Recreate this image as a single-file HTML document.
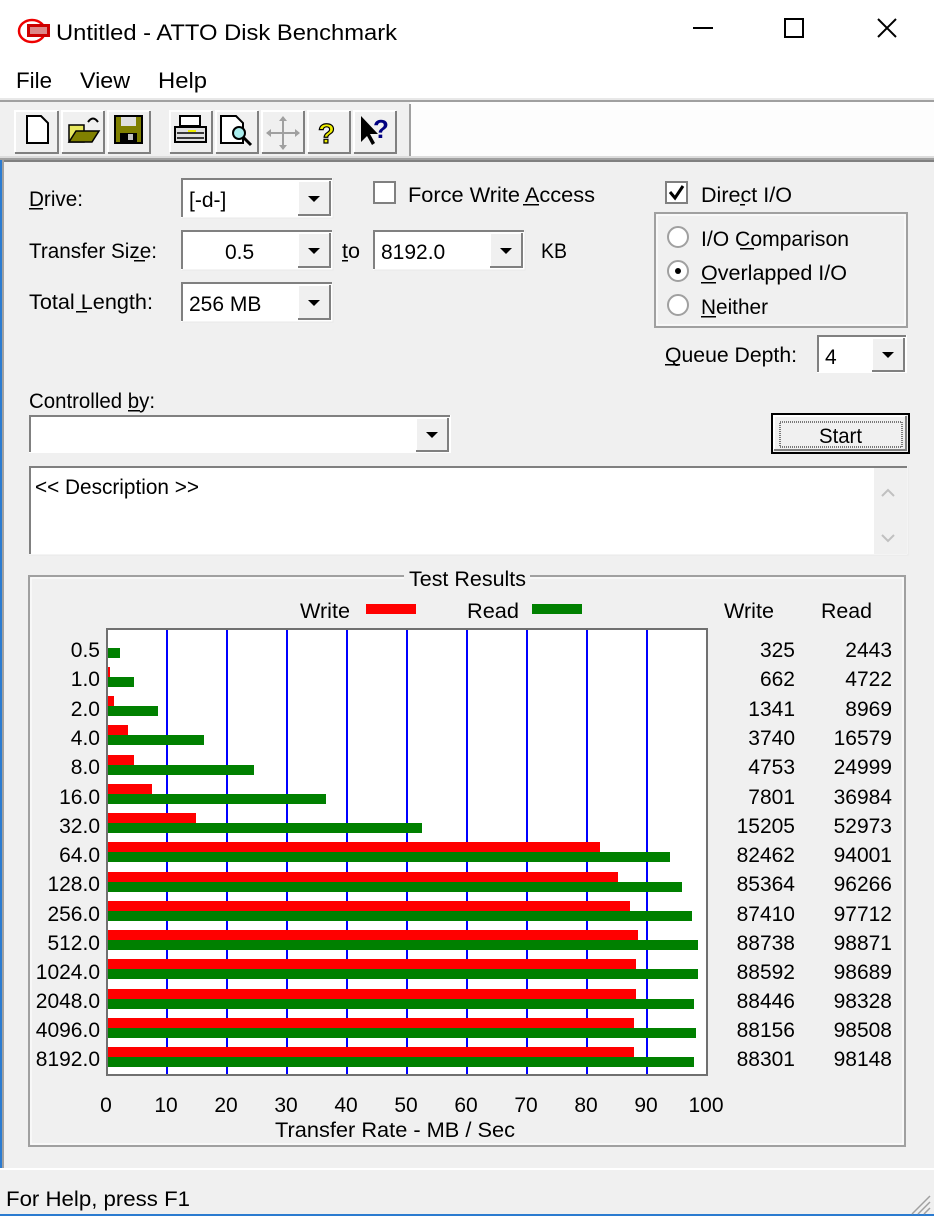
<!DOCTYPE html>
<html><head><meta charset="utf-8"><style>
html,body{margin:0;padding:0;width:934px;height:1216px;overflow:hidden;background:#f0f0f0}
svg{display:block}
text{font-family:"Liberation Sans",sans-serif;fill:#000}
</style></head><body>
<svg width="934" height="1216" viewBox="0 0 934 1216" xmlns="http://www.w3.org/2000/svg">
<defs>
<g id="arrow"><path d="M-6,-3 L6,-3 L0,3 Z" fill="#000"/></g>
</defs>
<!-- title & menu -->
<rect x="0" y="0" width="934" height="100" fill="#fff"/>
<ellipse cx="32" cy="31" rx="13" ry="11" fill="none" stroke="#e00" stroke-width="2.5"/>
<rect x="27" y="24" width="23" height="13" fill="#c00"/>
<rect x="30" y="27" width="17" height="7" fill="#d88"/>
<text x="56" y="40" font-size="22" textLength="341" lengthAdjust="spacingAndGlyphs">Untitled - ATTO Disk Benchmark</text>
<rect x="693" y="27" width="20" height="2" fill="#000"/>
<rect x="785" y="19" width="18" height="18" fill="none" stroke="#000" stroke-width="2"/>
<path d="M878,19 L896,37 M896,19 L878,37" stroke="#000" stroke-width="2"/>
<text x="16" y="88" font-size="22" textLength="36" lengthAdjust="spacingAndGlyphs">File</text>
<text x="80" y="88" font-size="22" textLength="50" lengthAdjust="spacingAndGlyphs">View</text>
<text x="158" y="88" font-size="22" textLength="49" lengthAdjust="spacingAndGlyphs">Help</text>
<rect x="0" y="98" width="934" height="2" fill="#e8e8e8"/>
<rect x="0" y="100" width="934" height="2" fill="#a0a0a0"/>
<!-- toolbar -->
<rect x="0" y="102" width="410" height="56" fill="#f0f0f0"/>
<rect x="410" y="102" width="524" height="56" fill="#fdfdfd"/>
<rect x="409" y="104" width="2" height="54" fill="#a0a0a0"/>
<rect x="0" y="156" width="934" height="2" fill="#dcdcdc"/>
<g fill="#f0f0f0" stroke-width="2">
<g id="tb">
</g>
</g>
<g>
<!-- buttons -->
<g stroke="#fff" stroke-width="2" fill="none">
<path d="M15,152 V111 H58"/><path d="M62,152 V111 H104"/><path d="M108,152 V111 H150"/>
<path d="M170,152 V111 H212"/><path d="M216,152 V111 H258"/><path d="M262,152 V111 H304"/><path d="M308,152 V111 H350"/><path d="M354,152 V111 H396"/>
</g>
<g stroke="#808080" stroke-width="2" fill="none">
<path d="M15,153 H58 V111"/><path d="M62,153 H104 V111"/><path d="M108,153 H150 V111"/>
<path d="M170,153 H212 V111"/><path d="M216,153 H258 V111"/><path d="M262,153 H304 V111"/><path d="M308,153 H350 V111"/><path d="M354,153 H396 V111"/>
</g>
<!-- new -->
<path d="M27,116 H41 L48,123 V143 H27 Z" fill="#fff" stroke="#000" stroke-width="2"/>
<!-- open -->
<path d="M69,125 H84 V142 H69 Z" fill="#e8e860" stroke="#000" stroke-width="1.5"/>
<path d="M69,142 L76,131 H99 L92,142 Z" fill="#808000" stroke="#000" stroke-width="1.5"/>
<path d="M88,122 Q93,115 98,122" fill="none" stroke="#000" stroke-width="2"/>
<!-- save -->
<rect x="115" y="116" width="27" height="27" fill="#808000" stroke="#000" stroke-width="2"/>
<rect x="121" y="117" width="15" height="9" fill="#e0e0e0"/>
<rect x="120" y="133" width="17" height="9" fill="#000"/>
<rect x="128" y="134" width="5" height="6" fill="#c0c0c0"/>
<!-- print -->
<rect x="180" y="116" width="20" height="10" fill="#fff" stroke="#000" stroke-width="2"/>
<path d="M175,127 H206 V142 H175 Z" fill="#e0e0e0" stroke="#000" stroke-width="2"/>
<path d="M177,133 H204 M177,138 H204" stroke="#000" stroke-width="1.5"/>
<rect x="188" y="130" width="8" height="2" fill="#ee0"/>
<!-- preview -->
<path d="M221,116 H236 L243,123 V143 H221 Z" fill="#fff" stroke="#000" stroke-width="2"/>
<circle cx="239" cy="133" r="6" fill="#aee" stroke="#000" stroke-width="2"/>
<path d="M243,137 L251,145" stroke="#000" stroke-width="3"/>
<!-- move -->
<path d="M283,117 V149 M267,133 H299" stroke="#a0a0a0" stroke-width="2"/>
<path d="M283,116 l-4,5 h8z M283,150 l-4,-5 h8z M266,133 l5,-4 v8z M300,133 l-5,-4 v8z" fill="#a0a0a0"/>
<!-- help -->
<text x="318" y="143" font-size="28" font-weight="bold" style="fill:#ee0;stroke:#000;stroke-width:1.2">?</text>
<!-- whats this -->
<path d="M361,116 V142 L367,136 L372,145 L375,143 L370,134 L378,134 Z" fill="#000"/>
<text x="373" y="138" font-size="26" font-weight="bold" style="fill:#000080">?</text>
</g>
<!-- client area -->
<rect x="0" y="158" width="934" height="2" fill="#a0a0a0"/>
<rect x="0" y="160" width="2" height="1056" fill="#2b7bd0"/>
<rect x="2" y="160" width="2" height="1010" fill="#a0a0a0"/>
<rect x="4" y="160" width="930" height="2" fill="#808080"/>

<g font-size="21">
<text x="29" y="206" textLength="54" lengthAdjust="spacingAndGlyphs">Drive:</text>
<text x="29" y="258" textLength="128" lengthAdjust="spacingAndGlyphs">Transfer Size:</text>
<text x="29" y="309" textLength="124" lengthAdjust="spacingAndGlyphs">Total Length:</text>
<text x="408" y="202" textLength="187" lengthAdjust="spacingAndGlyphs">Force Write Access</text>
<text x="342" y="258" textLength="18" lengthAdjust="spacingAndGlyphs">to</text>
<text x="541" y="258" textLength="26" lengthAdjust="spacingAndGlyphs">KB</text>
<text x="701" y="202" textLength="91" lengthAdjust="spacingAndGlyphs">Direct I/O</text>
<text x="701" y="246" textLength="148" lengthAdjust="spacingAndGlyphs">I/O Comparison</text>
<text x="701" y="280" textLength="146" lengthAdjust="spacingAndGlyphs">Overlapped I/O</text>
<text x="701" y="314" textLength="67" lengthAdjust="spacingAndGlyphs">Neither</text>
<text x="665" y="362" textLength="132" lengthAdjust="spacingAndGlyphs">Queue Depth:</text>
<text x="29" y="408" textLength="126" lengthAdjust="spacingAndGlyphs">Controlled by:</text>
</g>
<!-- underlines -->
<g fill="#000">
<rect x="29" y="208" width="14" height="1.5"/><rect x="134" y="260" width="11" height="1.5"/><rect x="76" y="311" width="11" height="1.5"/>
<rect x="523" y="204" width="16" height="1.5"/><rect x="342" y="260" width="6" height="1.5"/><rect x="740" y="204" width="5" height="1.5"/>
<rect x="740" y="248" width="14" height="1.5"/><rect x="701" y="282" width="15" height="1.5"/><rect x="701" y="316" width="15" height="1.5"/>
<rect x="665" y="364" width="15" height="1.5"/><rect x="128" y="410" width="12" height="1.5"/>
</g>

<!-- combo boxes -->
<g>
<g id="c1"><rect x="181" y="178" width="152" height="40" fill="#fff"/><path d="M182,217 V179 H332" stroke="#808080" stroke-width="2" fill="none"/><path d="M182,218 H333 V178" stroke="#e8e8e8" stroke-width="1" fill="none"/>
<rect x="298" y="181" width="32" height="34" fill="#f0f0f0"/><path d="M298,215 V181 H330" stroke="#fff" stroke-width="2" fill="none"/><path d="M298,215 H330 V181" stroke="#808080" stroke-width="2" fill="none"/><use href="#arrow" x="314" y="199"/></g>
<use href="#c1" y="52"/>
<use href="#c1" y="104"/>
<g transform="translate(192,52)"><use href="#c1"/></g>
</g>
<text x="189" y="207" font-size="21">[-d-]</text>
<text x="225" y="259" font-size="21">0.5</text>
<text x="381" y="259" font-size="21">8192.0</text>
<text x="189" y="311" font-size="21">256 MB</text>

<!-- queue combo -->
<rect x="817" y="335" width="90" height="38" fill="#fff"/><path d="M818,372 V336 H906" stroke="#808080" stroke-width="2" fill="none"/>
<rect x="872" y="338" width="32" height="33" fill="#f0f0f0"/><path d="M872,371 V338 H904" stroke="#fff" stroke-width="2" fill="none"/><path d="M872,371 H904 V338" stroke="#808080" stroke-width="2" fill="none"/><use href="#arrow" x="888" y="355"/>
<text x="825" y="364" font-size="21">4</text>

<!-- controlled combo -->
<rect x="29" y="415" width="422" height="38" fill="#fff"/><path d="M30,452 V416 H450" stroke="#808080" stroke-width="2" fill="none"/>
<rect x="416" y="418" width="32" height="33" fill="#f0f0f0"/><path d="M416,451 V418 H448" stroke="#fff" stroke-width="2" fill="none"/><path d="M416,451 H448 V418" stroke="#808080" stroke-width="2" fill="none"/><use href="#arrow" x="432" y="435"/>

<!-- checkboxes -->
<rect x="374" y="182" width="21" height="21" fill="#fff" stroke="#808080" stroke-width="2"/>
<rect x="666" y="182" width="21" height="21" fill="#fff" stroke="#808080" stroke-width="2"/>
<path d="M670,192 L675,198 L683,186" fill="none" stroke="#000" stroke-width="3"/>

<!-- group box radio -->
<rect x="655" y="213" width="252" height="114" fill="none" stroke="#a0a0a0" stroke-width="2"/>
<rect x="657" y="215" width="248" height="110" fill="none" stroke="#fff" stroke-width="1"/>
<g fill="#fff" stroke="#a0a0a0" stroke-width="2">
<circle cx="678" cy="237" r="10"/><circle cx="678" cy="271" r="10"/><circle cx="678" cy="305" r="10"/>
</g>
<circle cx="678" cy="271" r="3" fill="#000"/>

<!-- start button -->
<rect x="772" y="414" width="137" height="39" fill="#f0f0f0" stroke="#000" stroke-width="2"/>
<path d="M774,450 V416 H906" stroke="#fff" stroke-width="2" fill="none"/>
<path d="M774,450 H906 V416" stroke="#808080" stroke-width="2" fill="none"/>
<rect x="780" y="422" width="122" height="25" fill="none" stroke="#000" stroke-width="1" stroke-dasharray="1,1"/>
<text x="819" y="443" font-size="21" textLength="43" lengthAdjust="spacingAndGlyphs">Start</text>

<!-- description -->
<rect x="29" y="466" width="879" height="89" fill="#fff"/>
<path d="M30,554 V467 H907" stroke="#808080" stroke-width="2" fill="none"/>
<path d="M29,555 H908 V466" stroke="#e8e8e8" stroke-width="1" fill="none"/>
<rect x="874" y="468" width="33" height="86" fill="#f0f0f0"/>
<path d="M882,496 L888,490 L894,496" stroke="#c0c0c0" stroke-width="2" fill="none"/>
<path d="M882,535 L888,541 L894,535" stroke="#c0c0c0" stroke-width="2" fill="none"/>
<text x="35" y="494" font-size="21" textLength="164" lengthAdjust="spacingAndGlyphs">&lt;&lt; Description &gt;&gt;</text>

<!-- test results group -->
<rect x="29" y="576" width="876" height="570" fill="none" stroke="#a0a0a0" stroke-width="2"/>
<rect x="31" y="578" width="872" height="566" fill="none" stroke="#fff" stroke-width="1"/>
<rect x="404" y="570" width="126" height="12" fill="#f0f0f0"/>
<text x="409" y="586" font-size="21" textLength="117" lengthAdjust="spacingAndGlyphs">Test Results</text>
<text x="300" y="618" font-size="21" textLength="50" lengthAdjust="spacingAndGlyphs">Write</text>
<rect x="366" y="604" width="50" height="10" fill="#f00"/>
<text x="467" y="618" font-size="21" textLength="52" lengthAdjust="spacingAndGlyphs">Read</text>
<rect x="532" y="604" width="50" height="10" fill="#008000"/>
<text x="724" y="618" font-size="21" textLength="50" lengthAdjust="spacingAndGlyphs">Write</text>
<text x="821" y="618" font-size="21" textLength="51" lengthAdjust="spacingAndGlyphs">Read</text>

<!-- plot -->
<rect x="107" y="629" width="600" height="446" fill="#fff" stroke="#707070" stroke-width="2"/>
<g stroke="#0000ff" stroke-width="2">
<path d="M167,630 V1074 M227,630 V1074 M287,630 V1074 M347,630 V1074 M407,630 V1074 M467,630 V1074 M527,630 V1074 M587,630 V1074 M647,630 V1074"/>
</g>
<g id="bars"></g>
<g font-size="21" text-anchor="end" id="labels"></g>
<g font-size="21" text-anchor="middle">
<text x="106" y="1112">0</text><text x="166" y="1112">10</text><text x="226" y="1112">20</text><text x="286" y="1112">30</text><text x="346" y="1112">40</text><text x="406" y="1112">50</text><text x="466" y="1112">60</text><text x="526" y="1112">70</text><text x="586" y="1112">80</text><text x="646" y="1112">90</text><text x="706" y="1112">100</text>
</g>
<text x="275" y="1137" font-size="21" textLength="240" lengthAdjust="spacingAndGlyphs">Transfer Rate - MB / Sec</text>

<!-- status bar -->
<rect x="0" y="1168" width="934" height="2" fill="#fff"/>
<rect x="0" y="1170" width="934" height="44" fill="#f0f0f0"/>
<rect x="0" y="1214" width="934" height="2" fill="#2b7bd0"/>
<text x="6" y="1206" font-size="21" textLength="184" lengthAdjust="spacingAndGlyphs">For Help, press F1</text>
<path d="M930,1196 L912,1214 M930,1202 L918,1214 M930,1208 L924,1214" stroke="#a0a0a0" stroke-width="1.5"/>

<g>
<!-- rows generated statically -->
<rect x="108" y="648" width="12" height="10" fill="#008000"/>
<rect x="108" y="667" width="2" height="10" fill="#f00"/><rect x="108" y="677" width="26" height="10" fill="#008000"/>
<rect x="108" y="696" width="6" height="10" fill="#f00"/><rect x="108" y="706" width="50" height="10" fill="#008000"/>
<rect x="108" y="725" width="20" height="10" fill="#f00"/><rect x="108" y="735" width="96" height="10" fill="#008000"/>
<rect x="108" y="755" width="26" height="10" fill="#f00"/><rect x="108" y="765" width="146" height="10" fill="#008000"/>
<rect x="108" y="784" width="44" height="10" fill="#f00"/><rect x="108" y="794" width="218" height="10" fill="#008000"/>
<rect x="108" y="813" width="88" height="10" fill="#f00"/><rect x="108" y="823" width="314" height="10" fill="#008000"/>
<rect x="108" y="842" width="492" height="10" fill="#f00"/><rect x="108" y="852" width="562" height="10" fill="#008000"/>
<rect x="108" y="872" width="510" height="10" fill="#f00"/><rect x="108" y="882" width="574" height="10" fill="#008000"/>
<rect x="108" y="901" width="522" height="10" fill="#f00"/><rect x="108" y="911" width="584" height="10" fill="#008000"/>
<rect x="108" y="930" width="530" height="10" fill="#f00"/><rect x="108" y="940" width="590" height="10" fill="#008000"/>
<rect x="108" y="959" width="528" height="10" fill="#f00"/><rect x="108" y="969" width="590" height="10" fill="#008000"/>
<rect x="108" y="989" width="528" height="10" fill="#f00"/><rect x="108" y="999" width="586" height="10" fill="#008000"/>
<rect x="108" y="1018" width="526" height="10" fill="#f00"/><rect x="108" y="1028" width="588" height="10" fill="#008000"/>
<rect x="108" y="1047" width="526" height="10" fill="#f00"/><rect x="108" y="1057" width="586" height="10" fill="#008000"/>
</g>
<g font-size="21" text-anchor="end">
<text x="100" y="657">0.5</text><text x="795" y="657">325</text><text x="892" y="657">2443</text>
<text x="100" y="686">1.0</text><text x="795" y="686">662</text><text x="892" y="686">4722</text>
<text x="100" y="716">2.0</text><text x="795" y="716">1341</text><text x="892" y="716">8969</text>
<text x="100" y="745">4.0</text><text x="795" y="745">3740</text><text x="892" y="745">16579</text>
<text x="100" y="774">8.0</text><text x="795" y="774">4753</text><text x="892" y="774">24999</text>
<text x="100" y="804">16.0</text><text x="795" y="804">7801</text><text x="892" y="804">36984</text>
<text x="100" y="833">32.0</text><text x="795" y="833">15205</text><text x="892" y="833">52973</text>
<text x="100" y="862">64.0</text><text x="795" y="862">82462</text><text x="892" y="862">94001</text>
<text x="100" y="891">128.0</text><text x="795" y="891">85364</text><text x="892" y="891">96266</text>
<text x="100" y="921">256.0</text><text x="795" y="921">87410</text><text x="892" y="921">97712</text>
<text x="100" y="950">512.0</text><text x="795" y="950">88738</text><text x="892" y="950">98871</text>
<text x="100" y="979">1024.0</text><text x="795" y="979">88592</text><text x="892" y="979">98689</text>
<text x="100" y="1008">2048.0</text><text x="795" y="1008">88446</text><text x="892" y="1008">98328</text>
<text x="100" y="1037">4096.0</text><text x="795" y="1037">88156</text><text x="892" y="1037">98508</text>
<text x="100" y="1066">8192.0</text><text x="795" y="1066">88301</text><text x="892" y="1066">98148</text>
</g>
</svg>
</body></html>
